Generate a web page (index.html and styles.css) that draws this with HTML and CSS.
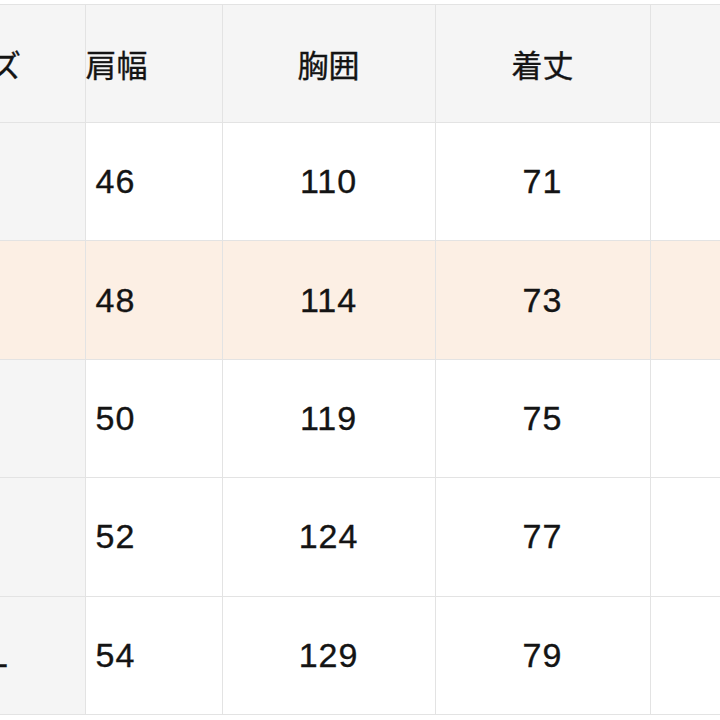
FILE: index.html
```html
<!DOCTYPE html>
<html lang="ja">
<head>
<meta charset="utf-8">
<link rel="stylesheet" href="styles.css">
</head>
<body>
<div class="wrap">
<table class="size-table">
  <colgroup>
    <col class="c1"><col class="c2"><col class="c3"><col class="c4"><col class="c5">
  </colgroup>
  <thead>
    <tr>
      <th class="first"><div class="first-inner">サイズ</div></th>
      <th class="shift"><div class="shift-inner">肩幅</div></th>
      <th>胸囲</th>
      <th>着丈</th>
      <th></th>
    </tr>
  </thead>
  <tbody>
    <tr>
      <td class="first"><div class="first-inner">S</div></td>
      <td class="shift"><div class="shift-inner">46</div></td>
      <td>110</td><td>71</td><td></td>
    </tr>
    <tr class="hl">
      <td class="first"><div class="first-inner">M</div></td>
      <td class="shift"><div class="shift-inner">48</div></td>
      <td>114</td><td>73</td><td></td>
    </tr>
    <tr>
      <td class="first"><div class="first-inner">L</div></td>
      <td class="shift"><div class="shift-inner">50</div></td>
      <td>119</td><td>75</td><td></td>
    </tr>
    <tr>
      <td class="first"><div class="first-inner">XL</div></td>
      <td class="shift"><div class="shift-inner">52</div></td>
      <td>124</td><td>77</td><td></td>
    </tr>
    <tr>
      <td class="first"><div class="first-inner">XXL</div></td>
      <td class="shift"><div class="shift-inner">54</div></td>
      <td>129</td><td>79</td><td></td>
    </tr>
  </tbody>
</table>
</div>
</body>
</html>
```
FILE: styles.css
```css
html, body {
  margin: 0;
  padding: 0;
  background: #ffffff;
}
body {
  font-family: "Liberation Sans", "Noto Sans CJK JP", sans-serif;
  color: #141414;
}
.wrap {
  width: 720px;
  height: 720px;
  overflow: hidden;
  padding-top: 4px;
  box-sizing: border-box;
}
.size-table {
  table-layout: fixed;
  border-collapse: collapse;
  width: 800px;
}
.c1 { width: 85px; }
.c2 { width: 137px; }
.c3 { width: 213px; }
.c4 { width: 215px; }
.c5 { width: 150px; }
.size-table th,
.size-table td {
  border: 1px solid #e3e3e3;
  text-align: center;
  vertical-align: middle;
  padding: 0;
  font-weight: 400;
  white-space: nowrap;
  overflow: visible;
  -webkit-text-stroke: 0.35px #141414;
}
.size-table th {
  height: 117px;
  background: #f5f5f5;
  font-size: 31px;
}
.size-table td {
  height: 117.4px;
  background: #ffffff;
  font-size: 34px;
  letter-spacing: 1px;
}
.size-table th:first-child,
.size-table td:first-child {
  border-left: none;
}
.size-table td.first {
  background: #f5f5f5;
}
.size-table tr.hl td {
  background: #fcefe4;
}
.first-inner {
  width: 120px;
  margin-left: -85px;
  text-align: center;
}
.shift-inner {
  width: 60px;
  text-align: center;
}
```
